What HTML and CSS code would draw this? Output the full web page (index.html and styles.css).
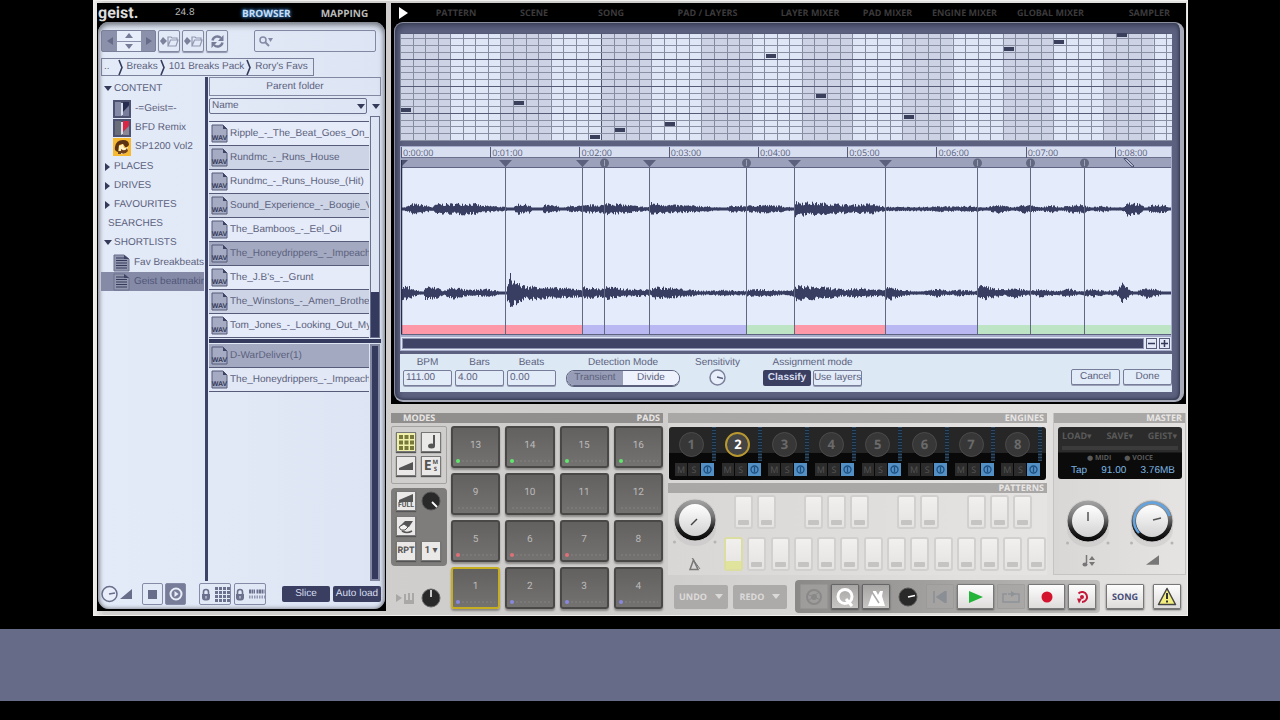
FILE: index.html
```html
<!DOCTYPE html>
<html lang="en">
<head>
<meta charset="utf-8">
<title>Geist</title>
<link rel="stylesheet" href="styles.css">
</head>
<body>
<svg class="defs" width="0" height="0" aria-hidden="true">
  <symbol id="wav" viewBox="0 0 17 19">
    <path d="M1 1h11l4 4v13H1z" fill="#a5abc2" stroke="#545b78"/>
    <path d="M12 1v4h4z" fill="#3e4464"/>
  </symbol>
  <symbol id="doc" viewBox="0 0 17 18">
    <path d="M1 1h10l5 4v12H1z" fill="#9197af" stroke="#6a708c"/>
    <path d="M3 4h8M3 6.500h11M3 9h11M3 11.500h11M3 14h11" stroke="#343a5a"/>
    <path d="M11 1v4h5z" fill="#3e4464"/>
  </symbol>
  <symbol id="ramp" viewBox="0 0 14 10"><path d="M0 10L14 0v10z" fill="currentColor"/></symbol>
  <symbol id="lock" viewBox="0 0 10 13">
    <path d="M2.500 6V4a2.500 2.500 0 015 0v2" fill="none" stroke="#6b718d" stroke-width="1.600"/>
    <path d="M1 6h8v3.500a3 3 0 01-3 3H4a3 3 0 01-3-3z" fill="#6b718d"/><path d="M5 8v2.500" stroke="#e2e8f5"/>
  </symbol>
  <symbol id="open" viewBox="0 0 19 12">
    <path d="M0 6l3-4 4 4-4 4z" fill="#7c829c"/>
    <path d="M8 11V2h3l1 1h5v2M8 11l2.500-6H18l-2 6z" fill="none" stroke="#9298b0" stroke-width="1.200"/>
  </symbol>
</svg>

<main class="app">
  <section class="browser" aria-label="Browser">
    <header class="brand">
      <h1>geist.</h1><span class="ver">24.8</span>
      <button class="on">BROWSER</button><button>MAPPING</button>
    </header>
    <div class="panel">
      <div class="tools">
        <div class="nav">
          <button aria-label="Back"><svg width="8" height="8"><path d="M7 0v8L1 4z" fill="#666c88"/></svg></button>
          <div class="updown">
            <button aria-label="Up"><svg width="8" height="5"><path d="M4 0l4 5H0z" fill="#777d98"/></svg></button>
            <button aria-label="Down"><svg width="8" height="5"><path d="M0 0h8L4 5z" fill="#777d98"/></svg></button>
          </div>
          <button aria-label="Forward"><svg width="8" height="8"><path d="M1 0v8l6-4z" fill="#666c88"/></svg></button>
        </div>
        <button class="tool" aria-label="Open in browser"><svg width="19" height="12"><use href="#open"/></svg></button>
        <button class="tool" aria-label="Open folder"><svg width="19" height="12"><use href="#open"/></svg></button>
        <button class="tool" aria-label="Refresh"><svg width="15" height="15" viewBox="0 0 15 15"><path d="M2.500 6.500A5 5 0 0111 4M12.500 8.500A5 5 0 014 11" fill="none" stroke="#777d98" stroke-width="2.400"/><path d="M13.500 1v6H8zM1.500 14V8H7z" fill="#777d98"/></svg></button>
        <label class="search"><svg width="14" height="11" viewBox="0 0 14 11"><circle cx="4" cy="4" r="3" fill="none" stroke="#858ba6" stroke-width="1.500"/><path d="M6 6l4 4" stroke="#858ba6" stroke-width="2"/><path d="M9 2h5l-2.500 4z" fill="#858ba6"/></svg><input type="search" aria-label="Search"></label>
      </div>
      <nav class="crumbs" aria-label="Path">
        <a href="#">..</a><svg width="5" height="17"><path d="M1 1l3 7.500L1 16" fill="none" stroke="#343a5a" stroke-width="1.600"/></svg>
        <a href="#">Breaks</a><svg width="5" height="17"><path d="M1 1l3 7.500L1 16" fill="none" stroke="#343a5a" stroke-width="1.600"/></svg>
        <a href="#">101 Breaks Pack</a><svg width="5" height="17"><path d="M1 1l3 7.500L1 16" fill="none" stroke="#343a5a" stroke-width="1.600"/></svg>
        <a href="#">Rory's Favs</a>
      </nav>
      <div class="split">
        <div class="tree">
          <div class="node open">CONTENT</div>
          <ul>
            <li><svg width="18" height="18"><path d="M0 0h18v18H0z" fill="#4c5270"/><path d="M2 2h6v14H2z" fill="#858ba7"/><path d="M10 2h6v3l-6 7z" fill="#262c50"/><path d="M8 3h2v12l-2 1z" fill="#d8ddec"/><path d="M10 12l6-6v10h-6z" fill="#777d9a"/></svg>-=Geist=-</li>
            <li><svg width="18" height="18"><path d="M0 0h18v18H0z" fill="#4c5270"/><path d="M2 2h6v14H2z" fill="#696e78"/><path d="M10 2h6v5l-6 6z" fill="#d92644"/><path d="M8 3h2v12l-2 1z" fill="#d8ddec"/><path d="M10 13l6-6v9h-6z" fill="#8b8795"/></svg>BFD Remix</li>
            <li><svg width="18" height="18"><path d="M0 0h18v18H0z" fill="#f6b92f"/><path d="M2 9q1-7 8-7 6 0 6 5l-3 3-3-4-4 1-1 7q-4-1-3-5z" fill="#5b3213"/><path d="M6 8l4-2 1 4 4-1-1 5q-4 4-8 1z" fill="#fff2c6"/><path d="M8 11q4 3 6-1l1 3q-3 4-7 2zM5 13h3v3H5z" fill="#71401c"/></svg>SP1200 Vol2</li>
          </ul>
          <div class="node">PLACES</div><div class="node">DRIVES</div><div class="node">FAVOURITES</div>
          <div class="node plain">SEARCHES</div><div class="node open">SHORTLISTS</div>
          <ul>
            <li><svg width="17" height="18"><use href="#doc"/></svg>Fav Breakbeats</li>
            <li class="sel"><svg width="17" height="18"><use href="#doc"/></svg>Geist beatmakin</li>
          </ul>
        </div>
        <div class="vbar"></div>
        <div class="files">
          <button class="parent">Parent folder</button>
          <div class="sortrow"><select aria-label="Sort by"><option>Name</option></select><i class="caret"></i></div>
          <div class="list">
            <ul>
              <li class="cut"></li>
              <li>Ripple_-_The_Beat_Goes_On_</li><li>Rundmc_-_Runs_House</li><li>Rundmc_-_Runs_House_(Hit)</li>
              <li>Sound_Experience_-_Boogie_V</li><li>The_Bamboos_-_Eel_Oil</li><li class="hot">The_Honeydrippers_-_Impeach</li>
              <li>The_J.B's_-_Grunt</li><li>The_Winstons_-_Amen_Brothe</li><li>Tom_Jones_-_Looking_Out_My</li>
            </ul>
            <div class="track"><i></i></div>
          </div>
          <div class="hbar"></div>
          <div class="list short">
            <ul><li class="hot">D-WarDeliver(1)</li><li>The_Honeydrippers_-_Impeach</li></ul>
            <div class="track full"></div>
          </div>
        </div>
      </div>
      <footer class="foot">
        <svg class="vol" width="32" height="18"><circle cx="8.500" cy="9" r="7.500" fill="#e9eefa" stroke="#686e89" stroke-width="1.500"/><path d="M8 9l6-1" stroke="#686e89" stroke-width="1.500"/><path d="M19 14L31 4v10z" fill="#686e89"/></svg>
        <button class="sq" aria-label="Stop"><svg width="9" height="9"><path d="M0 0h9v9H0z" fill="#686e89"/></svg></button>
        <button class="sq dark" aria-label="Preview"><svg width="14" height="14"><circle cx="7" cy="7" r="5.500" fill="none" stroke="#e9edf8" stroke-width="2"/><path d="M5.500 4l4 3-4 3z" fill="#e9edf8"/></svg></button>
        <button class="lk first" aria-label="Lock pads"><svg width="10" height="13"><use href="#lock"/></svg><svg width="15" height="15"><path d="M0 0h3v3H0zM4 0h3v3H4zM8 0h3v3H8zM12 0h3v3h-3zM0 4h3v3H0zM4 4h3v3H4zM8 4h3v3H8zM12 4h3v3h-3zM0 8h3v3H0zM4 8h3v3H4zM8 8h3v3H8zM12 8h3v3h-3zM0 12h3v3H0zM4 12h3v3H4zM8 12h3v3H8zM12 12h3v3h-3z" fill="#6b718d"/></svg></button>
        <button class="lk" aria-label="Lock pattern"><svg width="10" height="13"><use href="#lock"/></svg><svg width="16" height="10"><path d="M0 2.500h6M7.500 2.500h8" stroke="#6b718d" stroke-width="4" stroke-dasharray="2 .5"/><path d="M0 8h16" stroke="#9298b0" stroke-width="3" stroke-dasharray="1.500 1"/></svg></button>
        <button class="solid slice">Slice</button><button class="solid">Auto load</button>
      </footer>
    </div>
  </section>

  <div class="right">
    <section class="screen" aria-label="Sampler">
      <nav class="tabs">
        <svg width="9" height="12"><path d="M0 0l9 6-9 6z" fill="#fff"/></svg>
        <button>PATTERN</button><button>SCENE</button><button>SONG</button><button>PAD / LAYERS</button><button>LAYER MIXER</button><button>PAD MIXER</button><button>ENGINE MIXER</button><button>GLOBAL MIXER</button><button>SAMPLER</button>
      </nav>
      <div class="lcd">
        <svg class="grid" id="grid" viewBox="0 0 772 108" preserveAspectRatio="none"></svg>
        <div class="wavebox">
          <div class="ruler"><span>0:00:00</span><span>0:01:00</span><span>0:02:00</span><span>0:03:00</span><span>0:04:00</span><span>0:05:00</span><span>0:06:00</span><span>0:07:00</span><span>0:08:00</span></div>
          <svg class="wave" id="wave" viewBox="401 158 770 177" preserveAspectRatio="none"></svg>
          <div class="hscroll"><div class="thumb"></div><button aria-label="Zoom out"><svg width="7" height="7"><path d="M0 3.500h7" stroke="#343a5a" stroke-width="1.500"/></svg></button><button aria-label="Zoom in"><svg width="7" height="7"><path d="M0 3.500h7M3.500 0v7" stroke="#343a5a" stroke-width="1.500"/></svg></button></div>
        </div>
        <form class="controls" onsubmit="return false">
          <label class="num">BPM<input value="111.00"></label>
          <label class="num">Bars<input value="4.00"></label>
          <label class="num">Beats<input value="0.00"></label>
          <div class="group det"><span>Detection Mode</span><div class="seg"><button class="on">Transient</button><button>Divide</button></div></div>
          <div class="group sens"><span>Sensitivity</span><svg width="17" height="17"><circle cx="8.500" cy="8.500" r="7.500" fill="#e9f0fc" stroke="#7b819b" stroke-width="1.500"/><path d="M8 8l6 1.500" stroke="#5b617d" stroke-width="1.500"/></svg></div>
          <div class="group"><span>Assignment mode</span><div class="pair"><button class="solid">Classify</button><button class="box">Use layers</button></div></div>
          <div class="actions"><button class="box">Cancel</button><button class="box">Done</button></div>
        </form>
      </div>
    </section>

    <section class="deck">
      <div class="padside">
        <div class="bar"><span class="in">MODES</span><span>PADS</span></div>
        <div class="padwrap">
          <div class="modes">
            <div class="mbox">
              <button class="mb lit" aria-label="Pads"><svg width="15" height="15"><path d="M0 0h4v4H0zM5.500 0h4v4h-4zM11 0h4v4h-4zM0 5.500h4v4H0zM5.500 5.500h4v4h-4zM11 5.500h4v4h-4zM0 11h4v4H0zM5.500 11h4v4h-4zM11 11h4v4h-4z" fill="#77783a"/></svg></button>
              <button class="mb" aria-label="Notes"><svg width="9" height="14"><path d="M7 0v11" stroke="#555" stroke-width="2"/><ellipse cx="4.500" cy="11" rx="3.500" ry="2.500" fill="#555"/></svg></button>
              <button class="mb" aria-label="Levels"><svg width="14" height="8"><path d="M0 6L14 0v8H0z" fill="#555"/></svg></button>
              <button class="mb em" aria-label="Engine mute solo">E<small>M<br>S</small></button>
            </div>
            <div class="mdark">
              <button class="mb full" aria-label="Full"><svg width="14" height="8"><path d="M0 6L14 0v8H0z" fill="#555"/></svg>FULL</button>
              <svg width="20" height="20"><circle cx="10" cy="10" r="9" fill="#292929" stroke="#555"/><path d="M11 11l5 5" stroke="#fff" stroke-width="1.800"/></svg>
              <button class="mb" aria-label="Erase"><svg width="16" height="15"><path d="M2 7l5-5 8 0-4 6z" fill="#555"/><path d="M1 8l5-3 4 3-3 3H3z" fill="#f5f3f2" stroke="#555"/><path d="M4 12q5 3 10 0" fill="none" stroke="#555" stroke-width="1.500"/></svg></button><i></i>
              <button class="mb rpt">RPT</button><button class="mb one">1 ▾</button>
            </div>
            <div class="mlow"><svg width="18" height="12"><path d="M0 2v8l6-4zM8 2h2v6h2V1h2v7h2V1h2v11H8z" fill="#aaa8a7"/></svg><svg width="20" height="20"><circle cx="10" cy="10" r="9" fill="#292929" stroke="#666"/><path d="M10 2v7" stroke="#fff" stroke-width="1.500"/></svg></div>
          </div>
          <div class="pads" id="pads"></div>
        </div>
      </div>
      <div class="mixside">
        <div class="upper">
          <div class="engcol">
            <div class="bar"><span></span><span>ENGINES</span></div>
            <div class="engines" id="engines"></div>
            <div class="bar"><span></span><span>PATTERNS</span></div>
            <div class="patterns">
              <div class="metro">
                <svg width="46" height="56" viewBox="0 0 46 56"><use href="#knob"/><path d="M19 32l6-6" stroke="#444" stroke-width="1.500"/></svg>
                <svg width="14" height="14"><path d="M2 12.500L5.500 3 10 12.500z" fill="none" stroke="#777" stroke-width="1.500"/><path d="M4 1l8 11" stroke="#777"/></svg>
              </div>
              <div class="keys"><div class="krow up" id="keysUp"></div><div class="krow" id="keysLow"></div></div>
            </div>
          </div>
          <div class="master">
            <div class="bar"><span></span><span>MASTER</span></div>
            <div class="mdisp">
              <div class="mmenu"><button>LOAD▾</button><button>SAVE▾</button><button>GEIST▾</button></div>
              <div class="mled"><span>● MIDI</span><span>● VOICE</span></div>
              <div class="mval"><span>Tap</span><span>91.00</span><span>3.76MB</span></div>
            </div>
            <div class="mknobs">
              <div><svg width="46" height="56" viewBox="0 0 46 56"><use href="#knob"/><path d="M23 18v9" stroke="#555" stroke-width="1.500"/></svg><svg width="13" height="12"><path d="M4.500 0v8" stroke="#777" stroke-width="1.500"/><ellipse cx="3" cy="9.500" rx="2.500" ry="2" fill="#777"/><path d="M7 5l3-4 3 4zM7 7h6l-3 4z" fill="#777"/></svg></div>
              <div><svg width="46" height="56" viewBox="0 0 46 56"><use href="#knob"/><path d="M10 39A18 18 0 1140.500 22" fill="none" stroke="#62a3e0" stroke-width="2.500"/><path d="M24 26l8-2" stroke="#555" stroke-width="1.500"/></svg><svg class="g" width="13" height="10"><use href="#ramp"/></svg></div>
            </div>
          </div>
        </div>
        <div class="transport">
          <button class="gray">UNDO<i></i></button><button class="gray">REDO<i></i></button>
          <div class="tbox">
            <button class="tb dim" aria-label="Sound bank"><svg width="18" height="18"><circle cx="9" cy="9" r="7" fill="none" stroke="#888" stroke-width="2"/><circle cx="9" cy="9" r="3" fill="#888"/><path d="M2 6l14 6M3 13L14 4" stroke="#888"/></svg></button>
            <button class="tb mid" aria-label="Quantise"><svg width="20" height="20"><circle cx="10" cy="9.500" r="7" fill="none" stroke="#fff" stroke-width="3"/><path d="M11 12l6 7" stroke="#fff" stroke-width="3"/></svg></button>
            <button class="tb mid" aria-label="Metronome"><svg width="20" height="18"><path d="M2 18L7 3h3l2 4 2-4h3l-1 5 3 10z" fill="#fff"/><path d="M4 1l9 14" stroke="#aaa" stroke-width="1.500"/></svg></button>
            <svg class="sk" width="20" height="20"><circle cx="10" cy="10" r="9" fill="#292929" stroke="#555"/><path d="M10 10l7-1.500" stroke="#fff" stroke-width="1.500"/></svg>
            <button class="tb dim" aria-label="Rewind"><svg width="14" height="12"><path d="M1 0v12M13 0L4 6l9 6z" fill="#808890" stroke="#808890" stroke-width="1.500"/></svg></button>
            <button class="tb wide" aria-label="Play"><svg width="14" height="12"><path d="M0 0l14 6-14 6z" fill="#25b43a"/></svg></button>
            <button class="tb dim" aria-label="Loop"><svg width="18" height="12"><path d="M5 3H1v8h16V3h-4M6 3h4" fill="none" stroke="#808890" stroke-width="1.500"/><path d="M9 0l5 3-5 3z" fill="#808890"/></svg></button>
            <button class="tb wide" aria-label="Record"><svg width="12" height="12"><circle cx="6" cy="6" r="5.500" fill="#d4142f"/></svg></button>
            <button class="tb" aria-label="Loop record"><svg width="14" height="14"><path d="M3.500 3.500A5 5 0 117 12" fill="none" stroke="#c4183a" stroke-width="2"/><circle cx="7" cy="7" r="2" fill="#c4183a"/><path d="M2 8.500h5L4 13.500z" fill="#c4183a"/></svg></button>
          </div>
          <button class="tb song">SONG</button>
          <button class="tb warn" aria-label="Warning"><svg width="20" height="19"><path d="M10 1.500l8.500 16h-17z" fill="#f4ee7e" stroke="#444" stroke-width="1.500" stroke-linejoin="round"/><path d="M10 6v6M10 13.500v2" stroke="#333" stroke-width="2"/></svg></button>
        </div>
      </div>
    </section>
  </div>
</main>
<svg class="defs" width="0" height="0" aria-hidden="true">
  <defs>
    <linearGradient id="kr" x2="0" y2="1"><stop offset="0" stop-color="#a6a6a6"/><stop offset=".4" stop-color="#777"/><stop offset=".7" stop-color="#222"/><stop offset="1" stop-color="#050505"/></linearGradient>
    <linearGradient id="kc" x2="0" y2="1"><stop offset="0" stop-color="#fff"/><stop offset="1" stop-color="#d2d2d2"/></linearGradient>
  </defs>
  <symbol id="knob" viewBox="0 0 46 56">
    <ellipse cx="23" cy="36" rx="21" ry="17" fill="#bbb" opacity=".35"/>
    <circle cx="23" cy="27" r="21" fill="url(#kr)" stroke="#d4d2d1"/><circle cx="23" cy="27" r="16" fill="url(#kc)"/>
    <circle cx="2.500" cy="49" r="1.500" fill="#b6b4b3"/><circle cx="43" cy="49" r="1.500" fill="#b6b4b3"/>
  </symbol>
</svg>
<div class="band"></div>
<script src="app.js"></script>
</body>
</html>
```

FILE: styles.css
```css
* { box-sizing: border-box; }
body { margin: 0; background: #000; font: 10px/12px "Liberation Sans", Arial, sans-serif; color: #5b617d; text-rendering: geometricPrecision; }
button, input, select { font: inherit; color: inherit; border: 0; padding: 0; margin: 0; background: none; text-rendering: inherit; }
button { display: flex; align-items: center; justify-content: center; white-space: nowrap; }
ul { list-style: none; margin: 0; padding: 0; }
a { color: inherit; text-decoration: none; }
svg { display: block; flex: none; }
.defs { position: absolute; }
.band { height: 72px; margin-top: 13px; background: #666b87; }

.app { margin: 0 92px 0 93px; padding: 3px 2px 3px 4px; display: grid; grid-template-columns: 289px minmax(0, 1fr); gap: 5px; background: linear-gradient(90deg, #f2f0ef, #d2d0cf 1%, #cfcdcc 50%, #e2e0df 80%); box-shadow: inset 0 0 0 1px #f1efee; }

/* Browser */
.browser { background: #000; display: flex; flex-direction: column; margin-bottom: 2px; padding: 0 1px 2px; }
.brand { height: 19px; display: flex; align-items: center; color: #b9b9b9; font: bold 10px/12px "Open Sans", sans-serif; }
.brand h1 { margin: 0; font: bold 16px/16px Roboto, sans-serif; color: #ddd; width: 77px; }
.ver { font: 10px/12px "Liberation Sans", sans-serif; width: 67px; }
.brand .on { color: #c5def5; text-shadow: 0 0 4px #3d7fc0, 0 0 3px #3d7fc0; margin-right: 30px; }
.panel { flex: 1; border-radius: 11px; padding: 8px 4px 2px 3px; display: flex; flex-direction: column; background: linear-gradient(90deg, #e4ebf8, #dde4f3); box-shadow: inset 0 3px 6px #777c85, inset 0 0 4px #777c85; }
.tools { display: flex; gap: 2px; height: 22px; }
.nav { display: grid; grid-template-columns: 15px 24px 15px; background: #8b91ab; border: 1px solid #7a809a; width: 55px; border-radius: 2px; }
.updown { display: grid; grid-template-rows: 1fr 1fr; gap: 1px; }
.updown button { background: #e7edf9; }
.tool { width: 22px; border: 1px solid #8288a2; border-radius: 2px; box-shadow: 0 1px 1px #9096ad; }
.search { margin: 0 5px 0 auto; width: 122px; display: flex; align-items: center; gap: 3px; padding: 0 4px; border: 1px solid #8288a2; border-radius: 2px; }
.search input { min-width: 0; flex: 1; outline: 0; }
.crumbs { display: flex; align-items: center; align-self: flex-start; height: 18px; margin-top: 6px; border: 1px solid #7a809a; padding-right: 3px; }
.crumbs a { padding: 0 2px 0 4px; }
.crumbs a:first-child { padding: 0 8px 0 2px; }
.split { flex: 1; display: grid; grid-template-columns: 103px 3px minmax(0, 1fr); gap: 1px; margin-top: 1px; }
.tree { padding-top: 2px; overflow: hidden; }
.tree ul { padding: 1px 0; }
.tree li { height: 19px; display: flex; align-items: center; gap: 4px; padding-left: 12px; white-space: nowrap; overflow: hidden; }
.tree .sel { background: #858ba6; color: #50567a; }
.node { height: 19px; display: flex; align-items: center; gap: 2px; padding-left: 3px; }
.node::before { content: ""; border: 4px solid transparent; border-left: 5px solid #343a5a; border-right: 0; margin: 0 2px 0 1px; }
.node.open::before { border: 4px solid transparent; border-top: 5px solid #343a5a; border-bottom: 0; margin: 0; }
.node.plain { padding-left: 7px; }
.node.plain::before { display: none; }
.vbar { background: #3d4366; }
.files { display: flex; flex-direction: column; }
.parent { height: 19px; border: 1px solid #8288a2; }
.sortrow { position: relative; display: flex; align-items: center; gap: 5px; height: 20px; }
.sortrow select { width: 158px; height: 16px; appearance: none; border: 1px solid #6a708c; border-radius: 2px; padding-left: 2px; }
.caret { border: 4px solid transparent; border-top: 5px solid #343a5a; border-bottom: 0; }
.sortrow::after { content: ""; position: absolute; left: 148px; top: 8px; border: 4px solid transparent; border-top: 5px solid #343a5a; border-bottom: 0; pointer-events: none; }
.list { display: grid; grid-template-columns: minmax(0, 1fr) 10px; gap: 1px; margin-right: 1px; height: 221px; }
.list li { height: 24px; display: flex; align-items: center; gap: 2px; padding-left: 2px; white-space: nowrap; overflow: hidden; border-bottom: 1px solid #555b78; }
.list li:nth-child(odd) { background: #cdd4e6; }
.list li:nth-child(even) { background: #e5ebf8; }
.list li.hot { background: #a3a9c1; }
.list li.cut { height: 6px; background: #e2e8f5; }
.list li text { font: bold 7px "Liberation Sans", sans-serif; fill: #343a5a; }
.track { border: 1px solid #6a708c; display: flex; align-items: flex-end; }
.track i { width: 100%; height: 45px; background: #343a5e; }
.track.full { background: #343a5e; border: 2px solid #8288a2; }
.hbar { height: 4px; margin: 2px 0 1px; background: #343a5e; }
.list.short { flex: 1; height: auto; }
.short li:nth-child(even) { background: #e2e8f5; }
.foot { display: flex; align-items: center; gap: 3px; height: 26px; }
.sq { width: 21px; height: 22px; border: 1px solid #858ba6; border-radius: 2px; }
.vol { margin-right: 6px; }
.sq.dark { background: #777d98; margin-left: -1px; }
.lk { gap: 4px; width: 32px; height: 22px; border: 1px solid #858ba6; border-radius: 2px; }
.lk.first { margin-left: 10px; }
.solid { width: 48px; height: 16px; border-radius: 2px; background: #3a3f62; color: #d9def0; }
.slice { margin-left: auto; }

/* Sampler screen */
.right { min-width: 0; }
.screen { background: #000; padding: 0 2px 2px 3px; }
.tabs { height: 19px; display: grid; grid-template-columns: 18px 78fr 78fr 76fr 117fr 88fr 67fr 87fr 85fr 91fr; align-items: center; padding-left: 5px; color: #3b3a3c; font: bold 9px/12px "Open Sans", sans-serif; }
.tabs button:last-child { justify-content: flex-end; padding-right: 14px; }
.lcd { background: #5c6180; border-radius: 9px; border: 1px solid #8a8e9e; border-right: 4px solid #a7abb9; border-bottom: 2px solid #a7abb9; padding: 10px 8px 8px 5px; box-shadow: inset 2px 2px 6px #34394f, inset -1px -1px 3px #34394f; }
.grid { width: 100%; height: 108px; }
.wavebox { margin-top: 5px; border: 1px solid #a7aecb; background: #a7aecb; }
.ruler { display: grid; grid-template-columns: repeat(8, 892fr) 560fr; height: 11px; background: #d8dff0; border-bottom: 1px solid #6a708c; font: 9px/11px "Open Sans", sans-serif; }
.ruler span { border-left: 1px solid #555b78; padding-left: 1px; white-space: nowrap; }
.wave { width: 100%; height: 177px; }
.hscroll { display: grid; grid-template-columns: 1fr 11px 11px; gap: 2px; height: 13px; margin-top: 2px; padding: 1px; background: #e2e8f6; }
.thumb { background: #3f4467; border: 1px solid #8f95b1; }
.hscroll button { border: 1px solid #555b78; }
.controls { margin-top: 3px; background: #dce8f4; height: 38px; display: flex; gap: 3px; padding: 3px 0 0 3px; }
.num, .group { display: flex; flex-direction: column; align-items: center; gap: 1px; white-space: nowrap; }
.num input, .box { border: 1px solid #777d98; border-radius: 2px; width: 49px; height: 16px; padding: 0 0 2px 2px; background: #e2ebf8; box-shadow: 0 1px 0 #9ba1b8; }
.box { padding: 0; justify-content: center; }
.group .box { width: 49px; }
.det { margin-left: 7px; }
.seg { display: flex; border: 1px solid #5b617d; border-radius: 9px; overflow: hidden; height: 16px; box-shadow: 0 1px 0 #5b617d; }
.seg button { width: 56px; background: #edf2fc; }
.seg .on { background: #979db6; }
.sens { margin: 0 20px 0 12px; gap: 0; }
.pair, .actions { display: flex; gap: 2px; }
.pair .solid { font-weight: bold; height: 16px; }
.actions { margin: 10px 0 0 auto; gap: 3px; padding-top: 2px; }

/* Hardware deck */
.deck { display: grid; grid-template-columns: 272px minmax(0, 1fr); gap: 5px; padding-top: 9px; }
.bar { height: 10px; display: flex; justify-content: space-between; padding: 0 3px 0 12px; background: #918f8e; color: #e8e6e5; font: bold 9px/10px "Open Sans", sans-serif; }
.padwrap { display: grid; grid-template-columns: 56px minmax(0, 1fr); gap: 4px; padding-top: 3px; }
.pads { display: grid; grid-template-columns: repeat(4, 1fr); grid-auto-rows: 42px; gap: 5px; padding-bottom: 2px; }
.pad { position: relative; border: 2px solid #494847; border-radius: 3px; background: linear-gradient(#626160, #747271); color: #bbb9b8; font: 10px/12px Roboto, sans-serif; padding-bottom: 2px; box-shadow: 0 2px 2px #8d8b8a; }
.pad i { position: absolute; left: 5px; right: 3px; bottom: 4px; height: 2px; background: repeating-linear-gradient(90deg, #7b7978 0 2px, transparent 2px 4px); }
.pad b { position: absolute; left: 3px; bottom: 3px; width: 4px; height: 4px; border-radius: 2px; }
.pad.sel { border-color: #c7ae20; }
.modes { display: flex; flex-direction: column; }
.mbox { display: grid; grid-template-columns: 20px 20px; gap: 4px 5px; padding: 5px 5px 7px 4px; border: 1px solid #a5a3a2; border-radius: 2px; }
.mb { width: 20px; height: 20px; background: #ebe9e8; border: 1px solid #777; color: #555; font: bold 8px/9px Roboto, sans-serif; box-shadow: 0 1px 1px #555; }
.mb.lit { background: #eff1aa; }
.em { font: bold 14px/14px "Open Sans", sans-serif; gap: 1px; }
.em small { font: bold 6px/7px "Open Sans", sans-serif; }
.mdark { display: grid; grid-template-columns: 20px 20px; gap: 5px; padding: 3px 5px 5px; background: #7f7d7c; border-radius: 4px; margin-top: 4px; align-items: center; }
.mb.full { flex-direction: column; font: bold 7px/7px Roboto, sans-serif; }
.one { font: bold 10px/10px Roboto, "DejaVu Sans", sans-serif; }
.rpt { font-size: 9px; }
.mlow { display: flex; align-items: center; gap: 7px; padding: 0 5px; margin-top: 22px; }

.mixside { min-width: 0; display: flex; flex-direction: column; gap: 5px; }
.upper { display: grid; grid-template-columns: minmax(0, 1fr) 133px; gap: 6px; }
.engcol, .master { background: linear-gradient(90deg, #d9d7d6, #e6e4e3); }
.engcol .bar, .master .bar { background: #aaa8a7; }
.engines { display: grid; grid-template-columns: repeat(8, 1fr); margin: 4px 1px 3px; height: 53px; padding: 0 3px 0 1px; border-radius: 3px; background: linear-gradient(#262626 0 48%, #090909 50%); }
.eng { display: grid; grid-template-columns: 1fr 5px; grid-template-rows: 34px 13px; row-gap: 2px; padding: 0 0 0 4px; }
.eng > button { place-self: center; width: 25px; height: 25px; border-radius: 50%; border: 1px solid #4b4b4b; background: #373737; color: #6a6a6a; font: bold 13px/14px "Open Sans", sans-serif; margin-left: -3px; }
.eng.sel > button { border: 2px solid #b9992f; color: #fff; background: #454545; }
.eng i { background: repeating-linear-gradient(#2e4961 0 1px, #172634 1px 3px); margin-right: 1px; }
.mso { grid-column: 1 / 3; display: grid; grid-template-columns: 12px 12px 13px; gap: 1px; margin-left: 1px; }
.mso button { background: #2c2c2c; color: #555; font: 9px/10px "Open Sans", sans-serif; }
.mso button:last-child { background: #5290c6; }
.patterns { display: grid; grid-template-columns: 46px minmax(0, 1fr); gap: 6px; padding: 0 0 4px 4px; }
.metro { display: flex; flex-direction: column; align-items: center; gap: 8px; }
.keys { display: flex; flex-direction: column; gap: 8px; padding-top: 2px; margin-right: -3px; }
.krow { display: grid; grid-template-columns: repeat(14, 1fr); }
.krow.up { margin: 0 -10px 0 10px; }
.key { width: 19px; height: 34px; border: 2px solid #d2d0cf; border-radius: 3px; background: linear-gradient(#f2f0ef, #e5e3e2); justify-self: start; align-items: flex-end; }
.key::after { content: ""; width: 11px; height: 5px; margin-bottom: 2px; background: #c6c4c3; border-radius: 1px; }
.key.sel { border-color: #dcdda0; }
.key.sel::after { background: #dfe39b; width: 15px; height: 8px; margin: 0; }
.master { border: 1px solid #c6c4c3; border-top: 0; display: flex; flex-direction: column; }
.mdisp { margin: 4px 3px 0 4px; height: 52px; border-radius: 3px; background: linear-gradient(#2b2b2b 0 48%, #0b0b0b 50%); display: flex; flex-direction: column; color: #5a5a5a; font: bold 9px/10px "Open Sans", "DejaVu Sans", sans-serif; }
.mmenu { display: flex; justify-content: space-between; padding: 4px 5px 0 4px; height: 17px; }
.mmenu button { align-items: flex-start; }
.mled { display: flex; justify-content: center; gap: 13px; margin: 2px 4px 0; padding-top: 5px; border-top: 4px solid #3b3b3b; font: bold 7px/8px "Open Sans", "DejaVu Sans", sans-serif; }
.mval { display: flex; justify-content: space-between; padding: 2px 7px 0 13px; color: #7db8e6; font: 10px/12px "Liberation Sans", sans-serif; }
.mknobs { display: flex; justify-content: space-between; padding: 15px 10px 0 11px; color: #777; }
.mknobs div { display: flex; flex-direction: column; align-items: center; gap: 5px; }
.transport { display: flex; align-items: center; gap: 5px; padding-left: 6px; height: 33px; }
.gray { width: 54px; height: 24px; gap: 8px; border-radius: 2px; background: #adabaa; color: #dcdad9; font: bold 9px/12px "Open Sans", sans-serif; }
.gray i { border: 4px solid transparent; border-top: 5px solid #dcdad9; border-bottom: 0; }
.tbox { flex: 1; display: flex; justify-content: space-between; align-items: center; height: 33px; margin-left: 3px; padding: 0 4px 0 5px; background: linear-gradient(90deg, #8b8988, #aaa8a7 60%, #c0bebd); border-radius: 4px; }
.tb { width: 28px; height: 25px; border: 1px solid #777; border-radius: 1px; background: linear-gradient(#fdfdfd, #dedcdb); box-shadow: 0 1px 2px #555; }
.tb.wide { width: 37px; }
.tb.dim { border-color: #9b9998; background: #a7a5a4; opacity: .7; box-shadow: none; }
.tb.mid { background: linear-gradient(#a7a5a4, #c8c6c5); border-color: #666; }
.sk { margin: 0 5px; }
.song { width: 38px; margin-left: 1px; color: #454c78; font: bold 9px/12px "Open Sans", sans-serif; }
.warn { margin: 0 5px 0 4px; }
```

FILE: app.js
```javascript
// Note grid
const g = document.getElementById('grid');
let s = '<rect width="772" height="108" fill="#dfe7f6"/>';
for (let i = 0; i < 62; i += 8) s += `<rect x="${i * 12.56}" width="50.24" height="108" fill="#cdd3e4"/>`;
for (let i = 0; i < 62; i++) s += `<path d="M${Math.round(i * 12.56) + .5} 0V108" stroke="${i === 16 ? '#50566f' : '#858b9f'}"/>`;
for (let i = 0; i < 16; i++) s += `<path d="M0 ${Math.round(107 - i * 6.77) + .5}H772" stroke="${i % 4 || !i ? '#8a90a4' : '#555b74'}"/>`;
s += '<path d="M0 .5H772" stroke="#555b74"/>';
[[1, 77], [114, 70], [190, 104], [215, 97], [265, 91], [366, 23], [416, 63], [504, 84], [604, 16], [654, 9], [717, 2]]
  .forEach(([x, y]) => { s += `<rect x="${x}" y="${y - 2}" width="10" height="4" fill="#3a3f5c"/>`; });
g.innerHTML = s;

// Waveform: amplitude envelopes as [x, half height]
let seed = 7;
const rnd = () => (seed = (seed * 16807) % 2147483647) / 2147483647;
const top1 = [[402, 1], [408, 3], [412, 5], [422, 4], [432, 2], [437, 5], [450, 5], [462, 5.500], [475, 5], [482, 3], [492, 3], [503, 2], [513, 1], [517, 5], [529, 4], [532, 1], [541, 1], [544, 4], [556, 3], [562, 1], [570, 3], [582, 3], [590, 4], [604, 4], [607, 6], [625, 4], [645, 2], [649, 2], [651, 6], [668, 4], [700, 3], [725, 1], [730, 3], [746, 3], [760, 4], [780, 3], [793, 1.500], [794, 7], [815, 6], [835, 5], [850, 4], [870, 5], [885, 2], [930, 2], [945, 3], [955, 2], [970, 3], [985, 1.500], [998, 4], [1012, 1.500], [1024, 4], [1033, 3], [1040, 1.500], [1050, 4], [1060, 1.500], [1072, 4], [1082, 4], [1090, 1.500], [1104, 3], [1113, 1.500], [1124, 2], [1126, 7], [1138, 5], [1145, 1.500], [1153, 4], [1164, 4], [1169, 1], [1172, 1]];
const bot = [[402, 6], [410, 6], [415, 3], [423, 1], [425, 6], [438, 5], [443, 2], [453, 6], [465, 3], [475, 3], [482, 4], [493, 3], [500, 1], [506, 1], [507, 10], [511, 14], [520, 8], [528, 6], [535, 7], [550, 5], [562, 5], [575, 4], [582, 4], [584, 6], [600, 4], [606, 6], [625, 4], [650, 3], [653, 6], [670, 5], [690, 3], [707, 2], [720, 3], [745, 2], [750, 4], [770, 3], [785, 2], [793, 3], [795, 7], [815, 6], [830, 5], [845, 3], [855, 5], [867, 4], [885, 3], [887, 8], [894, 5], [910, 2], [922, 1.500], [936, 4], [948, 2], [958, 3], [977, 2], [979, 7], [992, 5], [1005, 3], [1014, 5], [1030, 2], [1040, 4], [1055, 2], [1070, 4], [1080, 1.500], [1092, 4], [1105, 2], [1117, 3], [1122, 9], [1130, 3], [1135, 1], [1145, 5], [1158, 3], [1165, 1], [1172, 1]];
function draw(env, cy) {
  let d = '', k = 0;
  for (let x = 402; x < 1171; x++) {
    while (k < env.length - 2 && env[k + 1][0] <= x) k++;
    const [x0, a0] = env[k], [x1, a1] = env[k + 1];
    const a = a0 + (a1 - a0) * (x - x0) / (x1 - x0);
    d += `M${x + .5} ${(cy - Math.max(1.5, a * (.55 + rnd() * .65))).toFixed(1)}V${(cy + Math.max(1.5, a * (.55 + rnd() * .65))).toFixed(1)}`;
  }
  return `<path d="${d}" stroke="#383e62"/>`;
}
let w = '<rect x="401" y="158" width="771" height="10" fill="#9ba1ba"/><rect x="401" y="168" width="771" height="167" fill="#e4ecfb"/><path d="M401 167.500H1172" stroke="#5d6380"/>';
[[401, 582, '#fc98a8'], [582, 746, '#bab8f3'], [746, 794, '#bde4c4'], [794, 886, '#fc98a8'], [886, 978, '#bab8f3'], [978, 1172, '#bde4c4']]
  .forEach(([a, b, c]) => { w += `<rect x="${a}" y="325" width="${b - a}" height="9" fill="${c}"/>`; });
w += '<path d="M401 334.500H1172" stroke="#5d6380"/>' + draw(top1, 209) + draw(bot, 293) + '<path d="M510.500 273V307" stroke="#383e62"/>';
[505, 582, 649, 794, 885].forEach(x => { w += `<path d="M${x + .5} 162V334" stroke="#62687f"/><path d="M${x - 6} 160h13l-6.500 7z" fill="#5b617d"/>`; });
[604, 746, 977, 1030, 1084].forEach(x => { w += `<path d="M${x + .5} 162V334" stroke="#62687f"/><circle cx="${x + .5}" cy="163" r="4.500" fill="#62687f"/><path d="M${x + .5} 160v6" stroke="#9ba1ba"/>`; });
w += '<path d="M401.500 160V334" stroke="#262b48" stroke-width="1.500"/><path d="M402 160h6l-6 6z" fill="#4b516e"/><path d="M1124 158l3 1 7 7-1 1-2-1-6-6z" fill="#b4bbd1" stroke="#343a5a" stroke-width=".8"/>';
document.getElementById('wave').innerHTML = w;

// Pads
const led = { 13: '#5fe86c', 14: '#5fe86c', 15: '#5fe86c', 16: '#5fe86c', 5: '#e07078', 6: '#e07078', 7: '#e07078', 1: '#8888e0', 2: '#8888e0', 3: '#8888e0', 4: '#8888e0' };
document.getElementById('pads').innerHTML = [13, 14, 15, 16, 9, 10, 11, 12, 5, 6, 7, 8, 1, 2, 3, 4]
  .map(n => `<button class="pad${n === 1 ? ' sel' : ''}">${n}<i></i>${led[n] ? `<b style="background:${led[n]}"></b>` : ''}</button>`).join('');

// Engines
document.getElementById('engines').innerHTML = [1, 2, 3, 4, 5, 6, 7, 8]
  .map(n => `<div class="eng${n === 2 ? ' sel' : ''}"><button>${n}</button><i></i><div class="mso"><button>M</button><button>S</button><button aria-label="Power"><svg width="9" height="9"><circle cx="4.500" cy="4.500" r="3.500" fill="none" stroke="#1f4f7e" stroke-width="1.300"/><path d="M4.500 2v5" stroke="#1f4f7e" stroke-width="1.300"/></svg></button></div></div>`).join('');

// Pattern keys
document.getElementById('keysUp').innerHTML = [1, 2, 4, 5, 6, 8, 9, 11, 12, 13]
  .map(c => `<button class="key" style="grid-column:${c}" aria-label="Pattern sharp ${c}"></button>`).join('');
document.getElementById('keysLow').innerHTML = Array.from({ length: 14 }, (_, i) => `<button class="key${i ? '' : ' sel'}" aria-label="Pattern ${i + 1}"></button>`).join('');

// File rows
document.querySelectorAll('.list li:not(.cut)').forEach(li => {
  li.innerHTML = `<svg width="17" height="19"><use href="#wav"/><text x="8.500" y="16" text-anchor="middle">WAV</text></svg><span>${li.textContent}</span>`;
});
```
